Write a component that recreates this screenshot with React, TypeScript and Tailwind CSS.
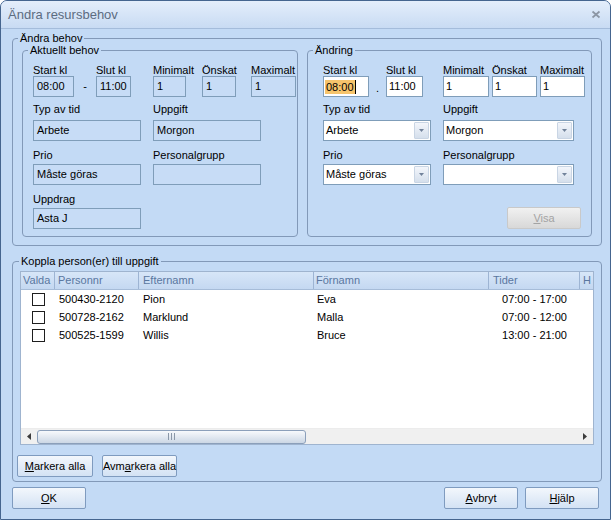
import React from "react";

function Label({ children, className = "" }: { children: React.ReactNode; className?: string }) {
  return <div className={"h-[12px] leading-[12px] whitespace-nowrap " + className}>{children}</div>;
}

function RoBox({ w, value }: { w: string; value: string }) {
  return (
    <div className={"h-[21px] border border-[#7f9db9] bg-[#c7dcf6] pl-[3px] flex items-center whitespace-nowrap " + w}>
      {value}
    </div>
  );
}

function EdBox({ w, value }: { w: string; value: string }) {
  return (
    <div className={"h-[21px] border border-[#7f9db9] bg-white pl-[2px] flex items-center whitespace-nowrap " + w}>
      {value}
    </div>
  );
}

function Combo({ w, value }: { w: string; value: string }) {
  return (
    <div className={"h-[21px] border border-[#7f9db9] bg-white flex items-stretch " + w}>
      <div className="flex-1 pl-[2px] flex items-center whitespace-nowrap">{value}</div>
      <div className="w-[15px] my-[1px] mr-[1px] bg-linear-to-b from-[#f3f6fb] to-[#d5dfec] border border-[#c9d5e4] rounded-[1px] flex items-center justify-center">
        <svg width="5" height="3" viewBox="0 0 5 3">
          <path d="M0 0H5L2.5 3Z" fill="#71829a" />
        </svg>
      </div>
    </div>
  );
}

function Btn({ children, w }: { children: React.ReactNode; w: string }) {
  return (
    <div
      className={
        "h-[22px] border border-[#7f9bbf] rounded-[2px] bg-linear-to-b from-[#f3f7fc] to-[#d3e2f4] flex items-center justify-center whitespace-nowrap " +
        w
      }
    >
      {children}
    </div>
  );
}

const rows = [
  { nr: "500430-2120", ef: "Pion", fn: "Eva", t: "07:00 - 17:00" },
  { nr: "500728-2162", ef: "Marklund", fn: "Malla", t: "07:00 - 12:00" },
  { nr: "500525-1599", ef: "Willis", fn: "Bruce", t: "13:00 - 21:00" },
];

export default function App() {
  return (
    <div className="w-[611px] h-[520px] bg-[#c3daf5] border border-[#45658f] rounded-t-[7px] flex flex-col overflow-hidden font-['Liberation_Sans',Arial,sans-serif] text-[11px] text-black">
      {/* Title bar */}
      <div className="h-[28px] shrink-0 flex items-center justify-between pl-[7px] pr-[9px] bg-linear-to-b from-[#e4eefb] to-[#c8dbf3] border-b border-[#a4bcdb]">
        <span className="text-[13px] text-[#5c6c81]">Ändra resursbehov</span>
        <svg width="10" height="9" viewBox="0 0 10 9">
          <path d="M1.5 1.5L8.5 7.5M8.5 1.5L1.5 7.5" stroke="#8c96a4" strokeWidth="1.7" />
        </svg>
      </div>

      <div className="flex-1 min-w-0 flex flex-col pl-[11px] pr-[8px] pt-[3px]">
        {/* Ändra behov */}
        <fieldset className="min-w-0 border border-[#8299b8] rounded-[4px]">
          <legend className="ml-[5px] px-[2px] leading-[12px]">Ändra behov</legend>
          <div className="flex gap-[9px] pl-[9px] pb-[8px]">
            {/* Aktuellt behov */}
            <fieldset className="min-w-0 w-[276px] border border-[#8299b8] rounded-[4px]">
              <legend className="ml-[5px] px-[2px] leading-[12px]">Aktuellt behov</legend>
              <div className="pl-[10px] pt-[8px] pb-[7px]">
                <div className="flex">
                  <div className="w-[41px]">
                    <Label>Start kl</Label>
                    <RoBox w="w-[41px]" value="08:00" />
                  </div>
                  <div className="w-[22px] pt-[12px]">
                    <div className="h-[21px] flex items-center justify-center">-</div>
                  </div>
                  <div className="w-[35px]">
                    <Label>Slut kl</Label>
                    <RoBox w="w-[35px]" value="11:00" />
                  </div>
                  <div className="w-[33px] ml-[22px]">
                    <Label>Minimalt</Label>
                    <RoBox w="w-[33px]" value="1" />
                  </div>
                  <div className="w-[34px] ml-[16px]">
                    <Label>Önskat</Label>
                    <RoBox w="w-[34px]" value="1" />
                  </div>
                  <div className="w-[45px] ml-[15px]">
                    <Label>Maximalt</Label>
                    <RoBox w="w-[45px]" value="1" />
                  </div>
                </div>
                <div className="flex mt-[6px]">
                  <div className="w-[108px]">
                    <Label className="mb-[5px]">Typ av tid</Label>
                    <RoBox w="w-[108px]" value="Arbete" />
                  </div>
                  <div className="w-[108px] ml-[12px]">
                    <Label className="mb-[5px]">Uppgift</Label>
                    <RoBox w="w-[108px]" value="Morgon" />
                  </div>
                </div>
                <div className="flex mt-[8px]">
                  <div className="w-[108px]">
                    <Label className="mb-[3px]">Prio</Label>
                    <RoBox w="w-[108px]" value="Måste göras" />
                  </div>
                  <div className="w-[108px] ml-[12px]">
                    <Label className="mb-[3px]">Personalgrupp</Label>
                    <RoBox w="w-[108px]" value="" />
                  </div>
                </div>
                <div className="mt-[8px] w-[108px]">
                  <Label className="mb-[3px]">Uppdrag</Label>
                  <RoBox w="w-[108px]" value="Asta J" />
                </div>
              </div>
            </fieldset>

            {/* Ändring */}
            <fieldset className="min-w-0 w-[285px] border border-[#8299b8] rounded-[4px]">
              <legend className="ml-[5px] px-[2px] leading-[12px]">Ändring</legend>
              <div className="pl-[15px] pt-[8px] pb-[7px]">
                <div className="flex">
                  <div className="w-[46px]">
                    <Label>Start kl</Label>
                    <div className="h-[21px] w-[46px] border border-[#7f9db9] bg-white pl-[1px] flex items-center">
                      <span className="bg-[#f6c46c] leading-[14px] px-[1px]">08:00</span>
                      <span className="w-[1px] h-[14px] bg-black" />
                    </div>
                  </div>
                  <div className="w-[17px] pt-[12px]">
                    <div className="h-[21px] flex items-center justify-center pt-[4px]">.</div>
                  </div>
                  <div className="w-[37px]">
                    <Label>Slut kl</Label>
                    <EdBox w="w-[37px]" value="11:00" />
                  </div>
                  <div className="w-[46px] ml-[20px]">
                    <Label>Minimalt</Label>
                    <EdBox w="w-[46px]" value="1" />
                  </div>
                  <div className="w-[45px] ml-[3px]">
                    <Label>Önskat</Label>
                    <EdBox w="w-[45px]" value="1" />
                  </div>
                  <div className="w-[45px] ml-[3px]">
                    <Label>Maximalt</Label>
                    <EdBox w="w-[45px]" value="1" />
                  </div>
                </div>
                <div className="flex mt-[6px]">
                  <div className="w-[108px]">
                    <Label className="mb-[5px]">Typ av tid</Label>
                    <Combo w="w-[108px]" value="Arbete" />
                  </div>
                  <div className="w-[131px] ml-[12px]">
                    <Label className="mb-[5px]">Uppgift</Label>
                    <Combo w="w-[131px]" value="Morgon" />
                  </div>
                </div>
                <div className="flex mt-[8px]">
                  <div className="w-[108px]">
                    <Label className="mb-[3px]">Prio</Label>
                    <Combo w="w-[108px]" value="Måste göras" />
                  </div>
                  <div className="w-[131px] ml-[12px]">
                    <Label className="mb-[3px]">Personalgrupp</Label>
                    <Combo w="w-[131px]" value="" />
                  </div>
                </div>
                <div className="mt-[22px] ml-[184px] w-[74px] h-[22px] border border-[#c9c9c9] rounded-[2px] bg-linear-to-b from-[#f1f1f1] to-[#d8d8d8] flex items-center justify-center text-[#a3a3a3]">
                  <span>
                    <span className="underline">V</span>isa
                  </span>
                </div>
              </div>
            </fieldset>
          </div>
        </fieldset>

        {/* Koppla person(er) */}
        <fieldset className="min-w-0 mt-[9px] border border-[#8299b8] rounded-[4px]">
          <legend className="ml-[6px] px-[2px] leading-[12px]">Koppla person(er) till uppgift</legend>
          <div className="px-[7px] pt-[4px]">
            <div className="h-[174px] border border-[#9fb4cf] bg-white flex flex-col overflow-hidden">
              <div className="h-[18px] shrink-0 flex bg-linear-to-b from-[#d7e6f8] to-[#c4d8f1] border-b border-[#a6bcd8] text-[#5a77a0]">
                <div className="w-[34px] shrink-0 pl-[2px] border-r border-[#9db4d3] flex items-center">Valda</div>
                <div className="w-[84px] shrink-0 pl-[3px] border-r border-[#9db4d3] flex items-center">Personnr</div>
                <div className="w-[175px] shrink-0 pl-[4px] border-r border-[#9db4d3] flex items-center">Efternamn</div>
                <div className="w-[175px] shrink-0 pl-[2px] border-r border-[#9db4d3] flex items-center">Förnamn</div>
                <div className="w-[91px] shrink-0 pl-[4px] border-r border-[#9db4d3] flex items-center">Tider</div>
                <div className="flex-1 min-w-0 pl-[3px] flex items-center overflow-hidden whitespace-nowrap">H</div>
              </div>
              {rows.map((r) => (
                <div key={r.nr} className="h-[18px] shrink-0 flex items-center">
                  <div className="w-[34px] shrink-0 flex justify-center">
                    <div className="w-[13px] h-[13px] border border-[#1e1e1e] bg-white" />
                  </div>
                  <div className="w-[84px] shrink-0 pl-[4px]">{r.nr}</div>
                  <div className="w-[175px] shrink-0 pl-[4px]">{r.ef}</div>
                  <div className="w-[175px] shrink-0 pl-[3px]">{r.fn}</div>
                  <div className="w-[91px] shrink-0 text-center">{r.t}</div>
                </div>
              ))}
              <div className="flex-1" />
              <div className="h-[16px] shrink-0 flex items-center bg-[#f0f0f0] border-t border-[#ececec]">
                <div className="w-[16px] h-full flex items-center justify-center">
                  <svg width="4" height="7" viewBox="0 0 4 7">
                    <path d="M4 0V7L0 3.5Z" fill="#3c3c3c" />
                  </svg>
                </div>
                <div className="w-[269px] h-[14px] rounded-[3px] border border-[#8b9fba] bg-linear-to-b from-[#f7f9fc] to-[#ccd7e5] flex items-center justify-center">
                  <svg width="7" height="7" viewBox="0 0 7 7">
                    <path d="M0.5 0V7M3.5 0V7M6.5 0V7" stroke="#8a97a8" strokeWidth="1" />
                  </svg>
                </div>
                <div className="flex-1" />
                <div className="w-[16px] h-full flex items-center justify-center">
                  <svg width="4" height="7" viewBox="0 0 4 7">
                    <path d="M0 0V7L4 3.5Z" fill="#3c3c3c" />
                  </svg>
                </div>
              </div>
            </div>
          </div>
          <div className="flex gap-[9px] pl-[4px] mt-[10px] pb-[4px]">
            <Btn w="w-[76px]">
              <span>
                <span className="underline">M</span>arkera alla
              </span>
            </Btn>
            <Btn w="w-[75px]">
              <span>
                Avm<span className="underline">a</span>rkera alla
              </span>
            </Btn>
          </div>
        </fieldset>

        {/* Bottom buttons */}
        <div className="flex mt-[5px] pr-[3px]">
          <Btn w="w-[74px]">
            <span>
              <span className="underline">O</span>K
            </span>
          </Btn>
          <div className="flex-1" />
          <Btn w="w-[74px]">
            <span>
              <span className="underline">A</span>vbryt
            </span>
          </Btn>
          <div className="w-[7px]" />
          <Btn w="w-[74px]">
            <span>
              <span className="underline">H</span>jälp
            </span>
          </Btn>
        </div>
      </div>
    </div>
  );
}
